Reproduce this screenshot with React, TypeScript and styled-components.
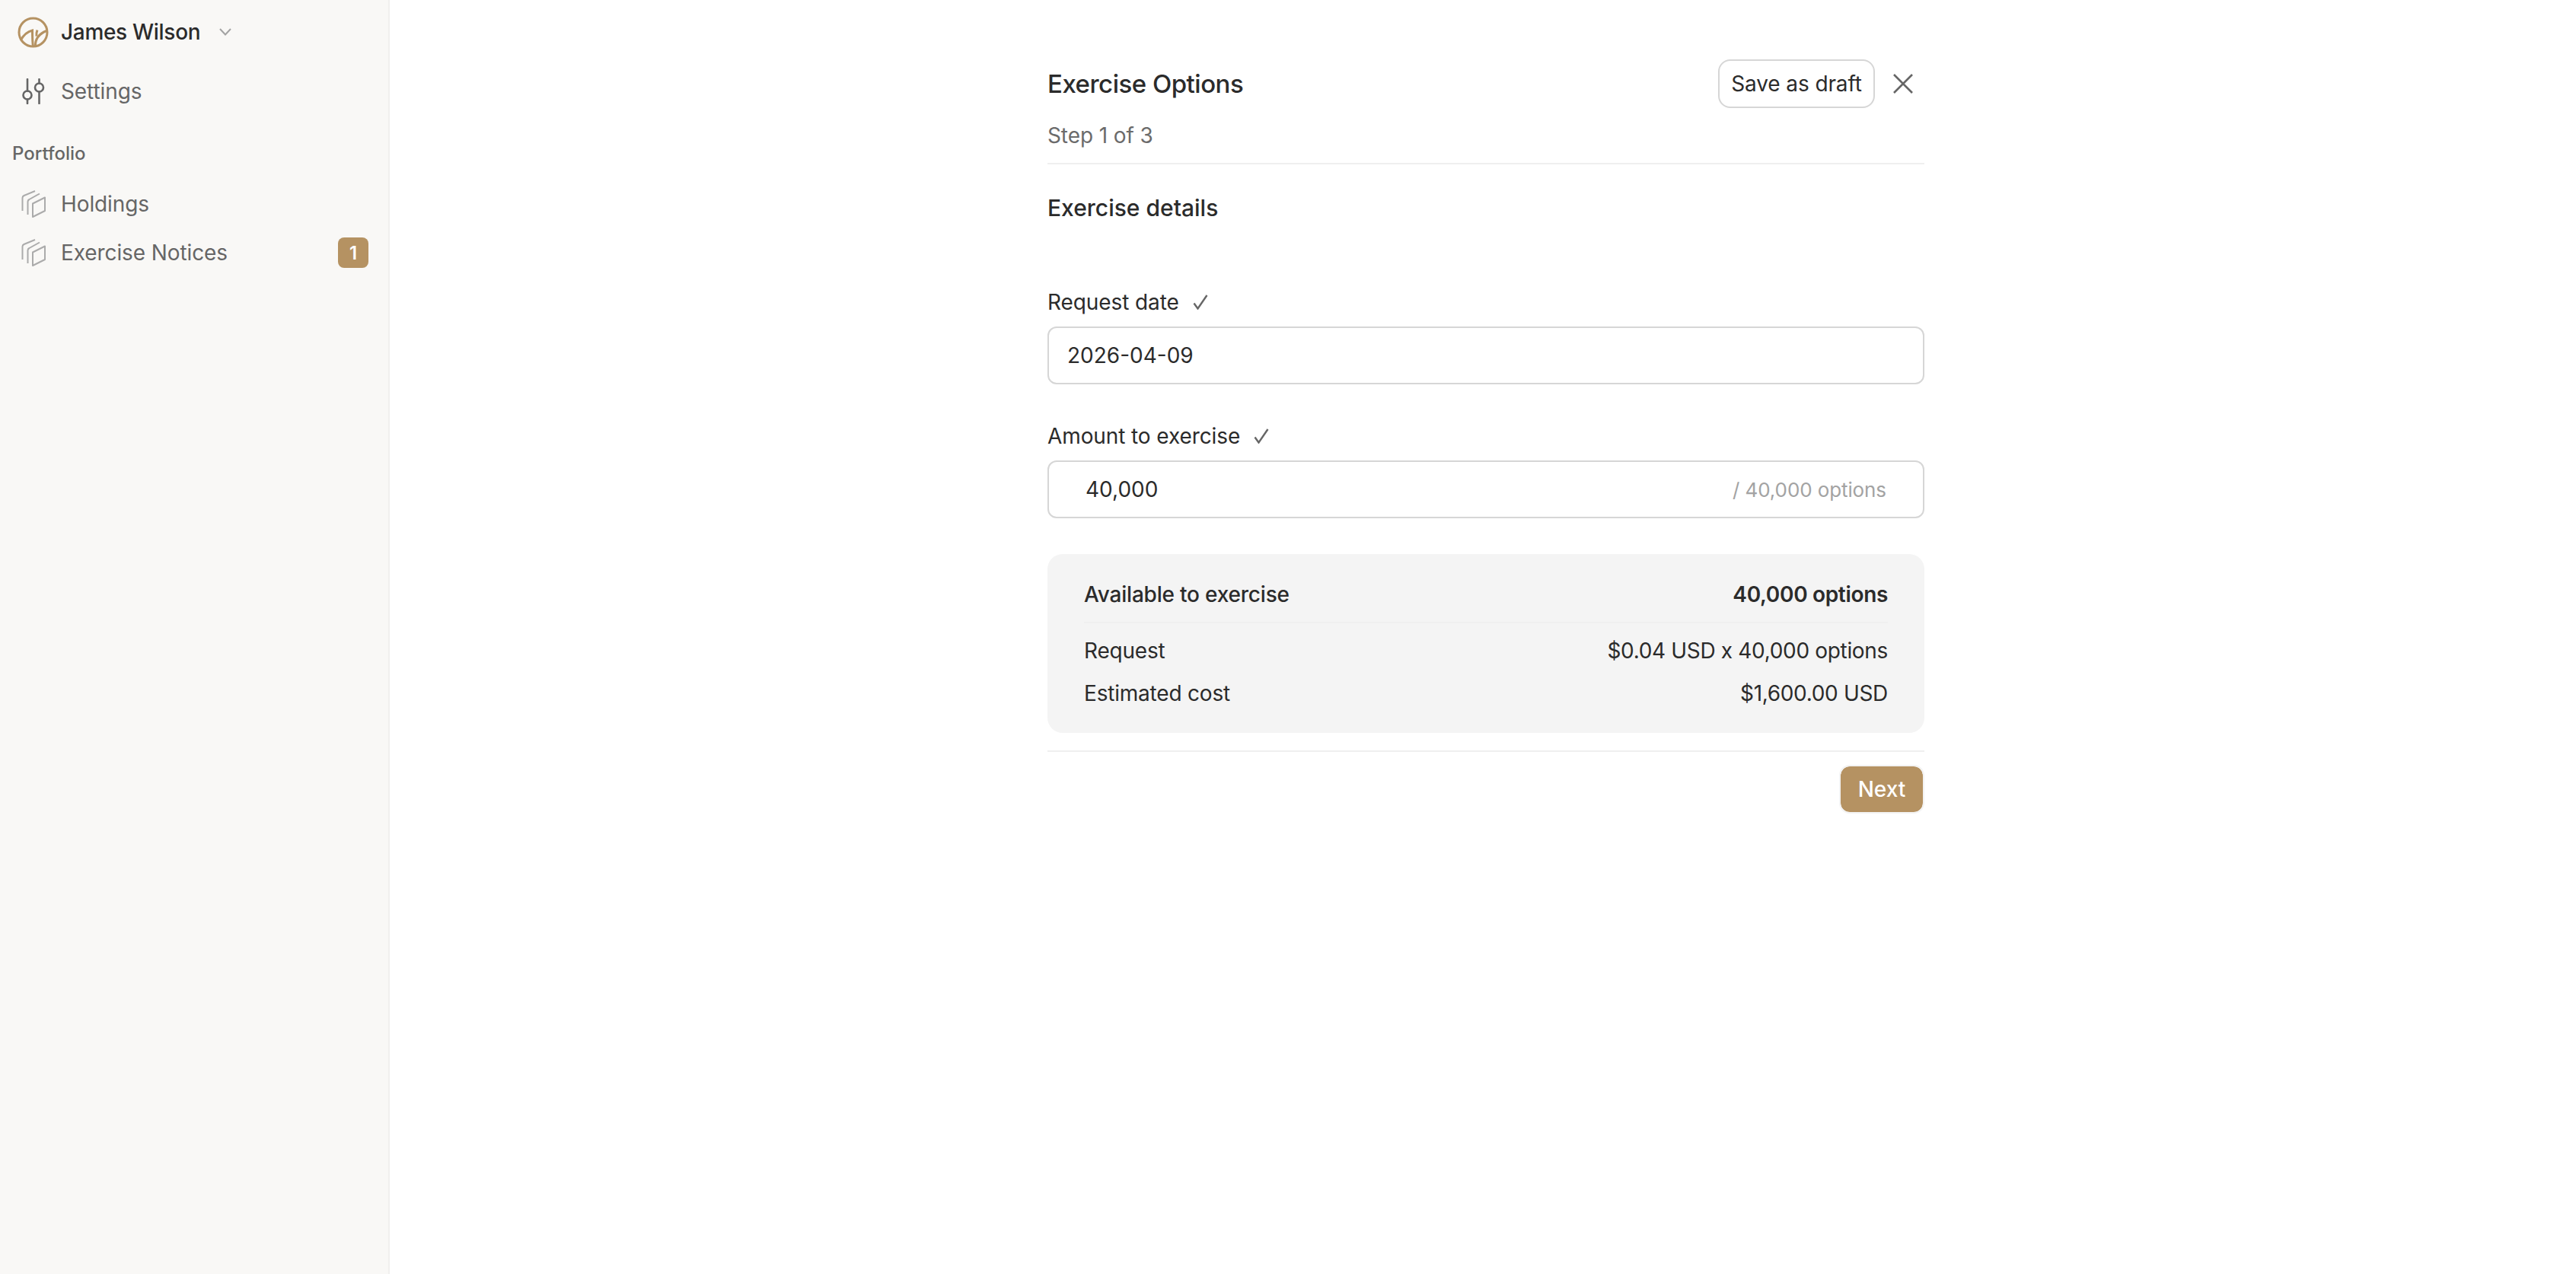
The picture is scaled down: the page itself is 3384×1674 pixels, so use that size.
import styled, { createGlobalStyle } from "styled-components";

const GlobalStyle = createGlobalStyle`
  html, body {
    margin: 0;
    padding: 0;
    background: #ffffff;
  }
  body {
    font-family: Inter, "Liberation Sans", sans-serif;
    color: #2b2b2b;
    letter-spacing: -0.3px;
  }
  * {
    box-sizing: border-box;
  }
`;

const Page = styled.div`
  display: flex;
  width: 100%;
  min-height: 1674px;
`;

const Sidebar = styled.aside`
  display: flex;
  flex-direction: column;
  flex: 0 0 512px;
  padding: 10px 26px 0 0;
  background: #f9f8f6;
  border-right: 2px solid #f1f0ee;
`;

const NavRow = styled.div<{ $top?: number }>`
  display: flex;
  align-items: center;
  gap: 16px;
  height: 64px;
  margin-top: ${(p) => p.$top ?? 0}px;
  padding-left: 23px;
`;

const IconSlot = styled.span`
  display: flex;
  align-items: center;
  justify-content: center;
  flex: 0 0 41px;
`;

const UserName = styled.span`
  font-size: 28px;
  font-weight: 500;
  color: #2b2b2b;
`;

const Chevron = styled.svg`
  margin-left: 9px;
`;

const NavLabel = styled.span`
  flex: 1;
  font-size: 28px;
  letter-spacing: -0.1px;
  color: #666666;
`;

const SectionLabel = styled.div`
  height: 32px;
  margin: 34px 0 18px;
  padding-left: 16px;
  font-size: 24px;
  font-weight: 500;
  line-height: 32px;
  letter-spacing: 0;
  color: #666666;
`;

const Badge = styled.span`
  display: flex;
  align-items: center;
  justify-content: center;
  width: 40px;
  height: 40px;
  border-radius: 8px;
  background: #b59262;
  color: #ffffff;
  font-size: 24px;
  font-weight: 600;
`;

const Main = styled.main`
  display: flex;
  flex: 1;
  justify-content: center;
  padding: 78px 0 0 8px;
`;

const Form = styled.div`
  width: 1152px;
`;

const TitleRow = styled.div`
  display: flex;
  align-items: center;
  justify-content: space-between;
  height: 64px;
`;

const Title = styled.h1`
  margin: 0;
  font-size: 33px;
  font-weight: 500;
  letter-spacing: -0.5px;
  color: #2b2b2b;
`;

const TitleActions = styled.div`
  display: flex;
  align-items: center;
  gap: 17px;
  padding-right: 8px;
`;

const DraftButton = styled.button`
  height: 64px;
  width: 206px;
  padding: 0;
  border: 2px solid #d6d6d6;
  border-radius: 16px;
  background: #ffffff;
  color: #2b2b2b;
  font-family: inherit;
  font-size: 28px;
  font-weight: 400;
  letter-spacing: -0.1px;
`;

const CloseButton = styled.button`
  display: flex;
  align-items: center;
  justify-content: center;
  width: 40px;
  height: 40px;
  padding: 0;
  border: 0;
  background: transparent;
`;

const StepText = styled.div`
  margin-top: 16px;
  font-size: 28px;
  line-height: 40px;
  letter-spacing: -0.1px;
  color: #6b6b6b;
`;

const Divider = styled.div<{ $top: number }>`
  height: 2px;
  margin-top: ${(p) => p.$top}px;
  background: #efefef;
`;

const SectionTitle = styled.h2`
  margin: 37px 0 0;
  font-size: 30px;
  font-weight: 500;
  line-height: 40px;
  letter-spacing: 0;
  color: #2b2b2b;
`;

const FieldLabel = styled.label<{ $top: number }>`
  display: flex;
  align-items: center;
  gap: 18px;
  height: 40px;
  margin-top: ${(p) => p.$top}px;
  font-size: 28px;
  letter-spacing: -0.1px;
  color: #2b2b2b;
`;

const FieldBox = styled.div<{ $inset: number }>`
  display: flex;
  align-items: center;
  justify-content: space-between;
  height: 76px;
  margin-top: 12px;
  padding: 0 48px 0 ${(p) => p.$inset}px;
  border: 2px solid #d6d6d6;
  border-radius: 12px;
  font-size: 28px;
  letter-spacing: 0;
  color: #2b2b2b;
`;

const FieldSuffix = styled.span`
  font-size: 26px;
  letter-spacing: -0.1px;
  color: #a3a3a3;
`;

const SummaryCard = styled.section`
  margin-top: 47px;
  padding: 33px 48px 32px;
  border-radius: 20px;
  background: #f4f4f4;
`;

const SummaryRow = styled.div<{ $strong?: boolean; $top?: number }>`
  display: flex;
  justify-content: space-between;
  height: 40px;
  margin-top: ${(p) => p.$top ?? 0}px;
  font-size: 28px;
  line-height: 40px;
  letter-spacing: -0.2px;
  font-weight: ${(p) => (p.$strong ? 500 : 400)};
  color: #2b2b2b;

  & > span:last-child {
    letter-spacing: -0.33px;
    font-weight: ${(p) => (p.$strong ? 600 : 400)};
  }
`;

const SummaryDivider = styled.div`
  height: 2px;
  margin-top: 16px;
  background: #efefef;
`;

const Footer = styled.div`
  display: flex;
  justify-content: flex-end;
  margin-top: 17px;
`;

const NextButton = styled.button`
  width: 112px;
  height: 64px;
  padding: 0;
  border: 2px solid #f3f3f3;
  border-radius: 14px;
  background: #b59262;
  background-clip: padding-box;
  color: #ffffff;
  font-family: inherit;
  font-size: 28px;
  font-weight: 500;
`;

const LogoIcon = () => (
  <svg width="41" height="41" viewBox="0 0 41 41" fill="none" stroke="#b59262" strokeWidth="3">
    <circle cx="20.5" cy="20.5" r="18.5" />
    <path d="M4 31C8 24 13 19.5 19.5 18C19.5 25 19.5 33 20.5 39" />
    <path d="M23.5 39C23 30 27 23 38 18.5" />
    <path d="M25 25.5C24.5 22 25 20 26 17.5" />
  </svg>
);

const SettingsIcon = () => (
  <svg width="30" height="34" viewBox="0 0 30 34" fill="none" stroke="#666666" strokeWidth="2.6" strokeLinecap="round">
    <path d="M7 1V16.5M7 27.5V33" />
    <circle cx="7" cy="22" r="5.5" />
    <path d="M22.5 1V6.5M22.5 17.5V33" />
    <circle cx="22.5" cy="12" r="5.5" />
  </svg>
);

const StackIcon = () => (
  <svg width="32" height="36" viewBox="0 0 32 36" fill="none" stroke="#ababab" strokeWidth="2" strokeLinejoin="round">
    <path d="M15 17.5L31 9.5V27L15 35Z" />
    <path d="M8.5 32V15Q8.5 13 10.5 12L24 4.5" />
    <path d="M1.5 27V10Q1.5 8 3.5 7L18 1" />
  </svg>
);

const CheckIcon = () => (
  <svg width="20" height="20" viewBox="0 0 20 20" fill="none" stroke="#666666" strokeWidth="2.4">
    <path d="M1.5 11.5L6.5 18.5L18.5 1" />
  </svg>
);

const App = () => (
  <>
    <GlobalStyle />
    <Page>
      <Sidebar>
        <NavRow>
          <IconSlot>
            <LogoIcon />
          </IconSlot>
          <UserName>James Wilson</UserName>
          <Chevron width="16" height="10" viewBox="0 0 16 10" fill="none" stroke="#a3a3a3" strokeWidth="2">
            <path d="M1 1L8 8.5L15 1" />
          </Chevron>
        </NavRow>
        <NavRow $top={14}>
          <IconSlot>
            <SettingsIcon />
          </IconSlot>
          <NavLabel>Settings</NavLabel>
        </NavRow>
        <SectionLabel>Portfolio</SectionLabel>
        <NavRow>
          <IconSlot>
            <StackIcon />
          </IconSlot>
          <NavLabel>Holdings</NavLabel>
        </NavRow>
        <NavRow>
          <IconSlot>
            <StackIcon />
          </IconSlot>
          <NavLabel>Exercise Notices</NavLabel>
          <Badge>1</Badge>
        </NavRow>
      </Sidebar>
      <Main>
        <Form>
          <TitleRow>
            <Title>Exercise Options</Title>
            <TitleActions>
              <DraftButton>Save as draft</DraftButton>
              <CloseButton>
                <svg width="26" height="26" viewBox="0 0 26 26" fill="none" stroke="#666666" strokeWidth="2.6">
                  <path d="M1 1L25 25M25 1L1 25" />
                </svg>
              </CloseButton>
            </TitleActions>
          </TitleRow>
          <StepText>Step 1 of 3</StepText>
          <Divider $top={16} />
          <SectionTitle>Exercise details</SectionTitle>
          <FieldLabel $top={84}>
            Request date
            <CheckIcon />
          </FieldLabel>
          <FieldBox $inset={24}>2026-04-09</FieldBox>
          <FieldLabel $top={48}>
            Amount to exercise
            <CheckIcon />
          </FieldLabel>
          <FieldBox $inset={48}>
            <span>40,000</span>
            <FieldSuffix>/ 40,000 options</FieldSuffix>
          </FieldBox>
          <SummaryCard>
            <SummaryRow $strong>
              <span>Available to exercise</span>
              <span>40,000 options</span>
            </SummaryRow>
            <SummaryDivider />
            <SummaryRow $top={16}>
              <span>Request</span>
              <span>$0.04 USD x 40,000 options</span>
            </SummaryRow>
            <SummaryRow $top={16}>
              <span>Estimated cost</span>
              <span>$1,600.00 USD</span>
            </SummaryRow>
          </SummaryCard>
          <Divider $top={23} />
          <Footer>
            <NextButton>Next</NextButton>
          </Footer>
        </Form>
      </Main>
    </Page>
  </>
);

export default App;
